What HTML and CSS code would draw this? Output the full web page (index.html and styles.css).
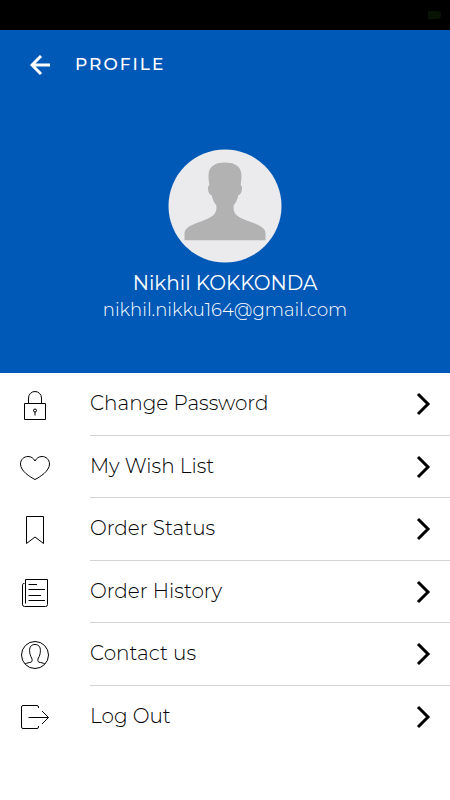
FILE: index.html
```html
<!DOCTYPE html>
<html lang="en">
  <head>
    <title>Profile</title>
    <meta charset="utf-8" />
    <meta name="viewport" content="width=device-width, initial-scale=1" />
    <link rel="stylesheet" href="styles.css">
  </head>
  <body>
    <div class="status-bar">
      <span class="battery"></span>
    </div>

    <header class="profile">
      <div class="toolbar">
        <button type="button" class="back" aria-label="Back">
          <svg width="20" height="20" viewBox="0 0 20 20">
            <path d="M20 10H2M11 1L2 10l9 9" />
          </svg>
        </button>
        <h1>PROFILE</h1>
      </div>

      <div class="user">
        <svg class="avatar" width="114" height="114" viewBox="0 0 114 114">
          <circle cx="57" cy="57" r="56.5" fill="#ebebed" />
          <path
            fill="#b2b2b2"
            d="M57 13.500C46 13.500 40.500 18 40.500 27c0 4 .6 6 .8 9.200-1.600 1-1.600 3-1 5.500.6 2.700 1.800 4.300 3.400 4.500.8 4.500 2.500 7.500 4.600 10 .8 7-1.800 10.500-8.800 13.500-8 3.500-16 5.500-20.500 9.500-2 1.600-2.500 3-2.500 6v6h81v-6c0-3-.5-4.400-2.500-6-4.500-4-12.500-6-20.500-9.500-7-3-9.600-6.500-8.800-13.500 2.100-2.500 3.800-5.500 4.600-10 1.600-.2 2.800-1.800 3.400-4.500.6-2.500.6-4.500-1-5.500.2-3.200.8-5.200.8-9.200 0-9-5.500-13.500-16.500-13.500z"
          />
        </svg>
        <p class="name">Nikhil KOKKONDA</p>
        <p class="email">nikhil.nikku164@gmail.com</p>
      </div>
    </header>

    <nav class="menu">
      <a href="#password">
        <svg class="icon" width="32" height="32" viewBox="0 0 32 32">
          <path d="M5.500 14.500h21v16h-21zM9.500 14.500V9a6.500 6.500 0 0 1 13 0v5.500M16 23v3.500" />
          <circle cx="16" cy="21.500" r="1.500" />
        </svg>
        <span class="label">Change Password</span>
        <svg class="chevron" width="16" height="24" viewBox="0 0 16 24"><path d="M2 2l10 10L2 22" /></svg>
      </a>
      <a href="#wishlist">
        <svg class="icon" width="32" height="32" viewBox="0 0 32 32">
          <path d="M16 27.500C11 25 1.500 19 1.500 12 1.500 7.500 5 4.500 9 4.500c3.200 0 5.500 1.700 7 4.500 1.500-2.800 3.800-4.500 7-4.500 4 0 7.500 3 7.500 7.500 0 7-9.500 13-14.500 15.500z" />
        </svg>
        <span class="label">My Wish List</span>
        <svg class="chevron" width="16" height="24" viewBox="0 0 16 24"><path d="M2 2l10 10L2 22" /></svg>
      </a>
      <a href="#status">
        <svg class="icon" width="32" height="32" viewBox="0 0 32 32">
          <path d="M7.500 2.500h17v27L16 23l-8.500 6.500z" />
        </svg>
        <span class="label">Order Status</span>
        <svg class="chevron" width="16" height="24" viewBox="0 0 16 24"><path d="M2 2l10 10L2 22" /></svg>
      </a>
      <a href="#history">
        <svg class="icon" width="32" height="32" viewBox="0 0 32 32">
          <path d="M6.500 26.500v-24h22v25a2 2 0 0 1-2 2h-21a2 2 0 0 1-2-2v-20q0-1 2-1M9.500 7.500H18M9.500 12.500H26M9.500 18.500H22M9.500 23.500H26" />
        </svg>
        <span class="label">Order History</span>
        <svg class="chevron" width="16" height="24" viewBox="0 0 16 24"><path d="M2 2l10 10L2 22" /></svg>
      </a>
      <a href="#contact">
        <svg class="icon" width="32" height="32" viewBox="0 0 32 32">
          <circle cx="16" cy="16" r="13.500" />
          <path d="M6 25c2-1.200 4-1.300 6-1.800 1.300-.4 1.500-2.700.6-4.200-1.200-2-2-4.500-2-7.500 0-4 2-6 5.400-6s5.400 2 5.400 6c0 3-.8 5.500-2 7.500-.9 1.500-.7 3.800.6 4.200 2 .5 4 .6 6 1.800" />
        </svg>
        <span class="label">Contact us</span>
        <svg class="chevron" width="16" height="24" viewBox="0 0 16 24"><path d="M2 2l10 10L2 22" /></svg>
      </a>
      <a href="#logout">
        <svg class="icon" width="32" height="32" viewBox="0 0 32 32">
          <path d="M19.500 6V5a1.500 1.500 0 0 0-1.500-1.500H4A1.500 1.500 0 0 0 2.500 5v20A1.500 1.500 0 0 0 4 26.500h14a1.500 1.500 0 0 0 1.500-1.500v-1M9.500 15.500h20M23 9l6.500 6.500L23 22" />
        </svg>
        <span class="label">Log Out</span>
        <svg class="chevron" width="16" height="24" viewBox="0 0 16 24"><path d="M2 2l10 10L2 22" /></svg>
      </a>
    </nav>
  </body>
</html>
```
FILE: styles.css
```css
* {
  box-sizing: border-box;
}

body {
  display: flex;
  flex-direction: column;
  min-height: 100vh;
  margin: 0;
  font-family: "Montserrat", "Inter", sans-serif;
  background: #fff;
  color: #000;
}

h1,
p {
  margin: 0;
}

.status-bar {
  display: flex;
  align-items: center;
  justify-content: flex-end;
  height: 30px;
  padding: 0 9px;
  background: #000;
}

.battery {
  width: 13px;
  height: 8px;
  border-radius: 0 4px 4px 0;
  background: #071403;
}

.profile {
  padding-bottom: 50px;
  background: #0058b7;
  color: #fff;
}

.toolbar {
  display: flex;
  align-items: center;
  gap: 25px;
  height: 70px;
  padding: 0 30px;
}

.toolbar h1 {
  padding-bottom: 2px;
  font-size: 17px;
  font-weight: 500;
  line-height: 20px;
  letter-spacing: 2px;
}

.back {
  display: flex;
  padding: 0;
  border: 0;
  background: none;
}

.back path {
  fill: none;
  stroke: #fff;
  stroke-width: 3;
}

.user {
  display: flex;
  flex-direction: column;
  align-items: center;
  padding-top: 49px;
}

.name {
  margin-top: 6px;
  font-size: 20px;
  font-weight: 400;
  line-height: 28px;
}

.email {
  font-size: 18px;
  font-weight: 300;
  line-height: 26px;
}

.menu {
  display: grid;
  flex: 1;
  grid-auto-rows: 1fr;
  padding-bottom: 52px;
}

.menu a {
  display: grid;
  grid-template-columns: 70px 1fr 16px;
  align-items: center;
  padding: 0 18px 0 19px;
  background: linear-gradient(#d3d3d3, #d3d3d3) 90px 100% / 100% 1px no-repeat;
  color: inherit;
  text-decoration: none;
}

.menu a:last-child {
  background: none;
}

.icon,
.chevron {
  fill: none;
  stroke: #000;
}

.icon {
  margin-top: 2px;
}

.chevron {
  stroke-width: 3;
}

.label {
  padding: 0 1px 2px;
  font-size: 20px;
  font-weight: 300;
  line-height: 28px;
}
```
